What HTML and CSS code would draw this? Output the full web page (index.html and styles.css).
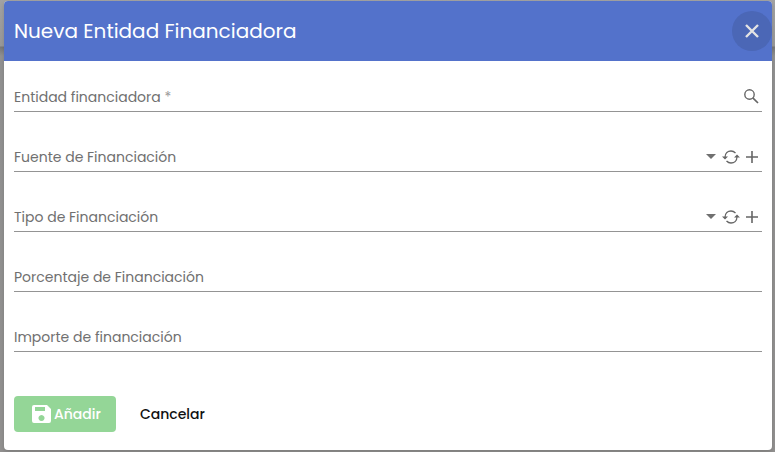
FILE: index.html
```html
<!DOCTYPE html>
<html lang="es">
<head>
<meta charset="utf-8">
<meta name="viewport" content="width=device-width, initial-scale=1">
<title>Nueva Entidad Financiadora</title>
<link rel="stylesheet" href="styles.css">
</head>
<body>
<svg class="sprite" aria-hidden="true">
  <symbol id="caret" viewBox="0 0 10 5"><path d="M0 0h10L5 5z" fill="currentColor"/></symbol>
  <symbol id="refresh" viewBox="0 0 18 16">
    <path d="M3 8.500C3 4 6 2 9 2q2.500 0 4.500 2M15 7.500C15 12 12 14 9 14q-2.500 0-4.500-2" fill="none" stroke="currentColor" stroke-width="1.300"/>
    <path d="M0 7.500h6L3 10.500zM12 8.500h6L15 5.500z" fill="currentColor"/>
  </symbol>
  <symbol id="plus" viewBox="0 0 12 12"><path d="M6 0v12M0 6h12" stroke="currentColor" stroke-width="1.600"/></symbol>
</svg>
<main class="dialog" role="dialog" aria-labelledby="title">
  <header class="header">
    <h1 class="title" id="title">Nueva Entidad Financiadora</h1>
    <button class="close" type="button" aria-label="Cerrar">
      <svg width="14" height="14" viewBox="0 0 14 14"><path d="M1 1l12 12M13 1L1 13" stroke="currentColor" stroke-width="2.4"/></svg>
    </button>
  </header>
  <form class="form">
    <div class="field">
      <label class="label" for="entidad">Entidad financiadora <span class="required">*</span></label>
      <input class="control" id="entidad" type="text">
      <button class="tool search" type="button" aria-label="Buscar">
        <svg width="15" height="15" viewBox="0 0 15 15"><circle cx="5.5" cy="5.5" r="4.700" fill="none" stroke="currentColor" stroke-width="1.400"/><path d="M8.800 8.800l5.200 5.200" stroke="currentColor" stroke-width="1.700"/></svg>
      </button>
    </div>
    <div class="field">
      <label class="label" for="fuente">Fuente de Financiación</label>
      <select class="control" id="fuente"><option></option></select>
      <svg class="caret" width="10" height="5" aria-hidden="true"><use href="#caret"/></svg>
      <button class="tool" type="button" aria-label="Recargar"><svg width="18" height="16"><use href="#refresh"/></svg></button>
      <button class="tool add" type="button" aria-label="Nuevo"><svg width="12" height="12"><use href="#plus"/></svg></button>
    </div>
    <div class="field">
      <label class="label" for="tipo">Tipo de Financiación</label>
      <select class="control" id="tipo"><option></option></select>
      <svg class="caret" width="10" height="5" aria-hidden="true"><use href="#caret"/></svg>
      <button class="tool" type="button" aria-label="Recargar"><svg width="18" height="16"><use href="#refresh"/></svg></button>
      <button class="tool add" type="button" aria-label="Nuevo"><svg width="12" height="12"><use href="#plus"/></svg></button>
    </div>
    <div class="field">
      <label class="label" for="porcentaje">Porcentaje de Financiación</label>
      <input class="control" id="porcentaje" type="text">
    </div>
    <div class="field">
      <label class="label" for="importe">Importe de financiación</label>
      <input class="control" id="importe" type="text">
    </div>
    <div class="actions">
      <button class="button save" type="submit">
        <svg width="20" height="18" viewBox="0 0 20 18" aria-hidden="true"><path fill="currentColor" fill-rule="evenodd" d="M2 0h13l4 4v12a2 2 0 0 1-2 2H2a2 2 0 0 1-2-2V2a2 2 0 0 1 2-2zM3 2v4h10V2zM9.500 10a3 3 0 1 0 .01 0z"/></svg>
        Añadir
      </button>
      <button class="button cancel" type="button">Cancelar</button>
    </div>
  </form>
</main>
</body>
</html>
```
FILE: styles.css
```css
* {
  box-sizing: border-box;
}

body {
  margin: 0;
  padding: 1px 3px 2px 4px;
  min-height: 100vh;
  background: linear-gradient(#a2a2a2 0, #999 46px, #777 47px, #929292 56px, #929190 100%);
  font-family: Poppins, Inter, sans-serif;
  font-size: 14px;
}

button,
input,
select {
  margin: 0;
  padding: 0;
  border: 0;
  background: none;
  font: inherit;
}

svg {
  display: block;
}

.sprite {
  position: absolute;
  width: 0;
  height: 0;
}

.dialog {
  overflow: hidden;
  border-radius: 4px;
  background: #fff;
  box-shadow: 0 2px 4px rgba(0, 0, 0, 0.15);
}

.header {
  display: flex;
  align-items: center;
  justify-content: space-between;
  height: 60px;
  padding-left: 10px;
  background: #5372cb;
  color: #fff;
}

.title {
  margin: 0;
  font-size: 20px;
  font-weight: 400;
}

.close {
  display: grid;
  place-items: center;
  width: 40px;
  height: 40px;
  border-radius: 50%;
  background: #4b67b6;
  color: #e4e4e4;
}

.form {
  display: flex;
  flex-direction: column;
  gap: 32px;
  padding: 23px 10px 18px;
}

.field {
  display: grid;
  grid-template-columns: 1fr auto auto auto;
  align-items: center;
  height: 28px;
  padding-bottom: 2px;
  border-bottom: 1px solid #949494;
  color: #707070;
}

.label {
  grid-area: 1 / 1;
  line-height: 20px;
  pointer-events: none;
}

.required {
  color: #999;
}

.control {
  grid-area: 1 / 1;
  width: 100%;
  height: 24px;
  appearance: none;
  outline: 0;
}

.caret {
  margin-right: 6px;
}

.tool {
  color: #666;
}

.add {
  padding: 0 4px 0 6px;
}

.search {
  grid-column: 4;
  padding-right: 3px;
}

.actions {
  display: flex;
  gap: 8px;
  margin-top: 12px;
}

.button {
  display: flex;
  align-items: center;
  height: 36px;
  border-radius: 4px;
  font-weight: 500;
}

.save {
  gap: 2px;
  padding: 0 15px 0 18px;
  background: #94d697;
  color: #fff;
}

.cancel {
  padding: 0 16px;
  color: #111;
}
```
